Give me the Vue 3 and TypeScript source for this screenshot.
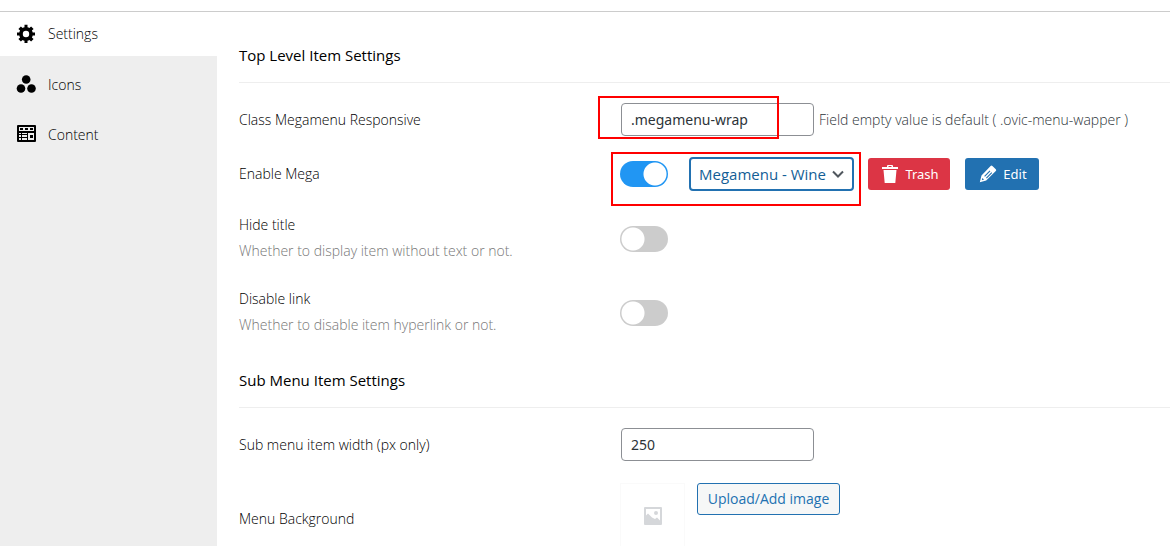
<script setup lang="ts">
import { ref } from 'vue'

const tabs = [
  { id: 'settings', label: 'Settings' },
  { id: 'icons', label: 'Icons' },
  { id: 'content', label: 'Content' },
]
const activeTab = ref('settings')
const responsiveClass = ref('.megamenu-wrap')
const enableMega = ref(true)
const megamenu = ref('wine')
const hideTitle = ref(false)
const disableLink = ref(false)
const itemWidth = ref('250')
</script>

<template>
  <div class="panel">
    <nav class="sidebar">
      <button
        v-for="tab in tabs"
        :key="tab.id"
        type="button"
        class="tab"
        :class="{ active: tab.id === activeTab }"
        @click="activeTab = tab.id"
      >
        <svg v-if="tab.id === 'settings'" class="tab-icon" viewBox="0 0 20 20" aria-hidden="true">
          <path d="M19 11.500h-2.300a6.800 6.800 0 0 1-.8 1.900l1.700 1.700-2.500 2.500-1.700-1.700a6.800 6.800 0 0 1-1.900.8V19h-3v-2.300a6.800 6.800 0 0 1-1.900-.8l-1.700 1.700-2.500-2.500 1.700-1.700a6.800 6.800 0 0 1-.8-1.900H1v-3h2.300a6.800 6.800 0 0 1 .8-1.900L2.400 4.900l2.500-2.500 1.700 1.700a6.800 6.800 0 0 1 1.900-.8V.8h3v2.500a6.800 6.800 0 0 1 1.900.8l1.700-1.700 2.500 2.500-1.700 1.700a6.800 6.800 0 0 1 .8 1.900H19zM10 13.200a3.200 3.200 0 1 0 0-6.400 3.200 3.200 0 0 0 0 6.400z" />
        </svg>
        <svg v-else-if="tab.id === 'icons'" class="tab-icon" viewBox="0 0 20 20" aria-hidden="true">
          <circle cx="10.200" cy="4.500" r="4.300" />
          <circle cx="5" cy="13.500" r="4.300" />
          <circle cx="15.500" cy="13.500" r="4.300" />
        </svg>
        <svg v-else class="tab-icon" viewBox="0 0 20 20" aria-hidden="true">
          <path fill-rule="evenodd" d="M2 0h17a1 1 0 0 1 1 1v15a1 1 0 0 1-1 1H2a1 1 0 0 1-1-1V1a1 1 0 0 1 1-1zM3 2v4h15V2zM3 8v1h2V8zM3 10v2h2v-2zM6 8v1h5V8zM6 10v2h5v-2zM3 13v2h2v-2zM6 13v2h5v-2zM12 8v7h6V8z" />
          <path d="M4 3h3v2H4zM9 3h3v2H9zM14 3h3v2h-3zM14 10h3v3h-3z" />
        </svg>
        {{ tab.label }}
      </button>
    </nav>

    <main class="content">
      <section>
        <h2>Top Level Item Settings</h2>
        <div class="row">
          <label class="name" for="responsive-class">Class Megamenu Responsive</label>
          <div class="field">
            <input id="responsive-class" v-model="responsiveClass" class="text" type="text" />
            <span class="note">Field empty value is default ( .ovic-menu-wapper )</span>
            <span class="mark mark-class"></span>
          </div>
        </div>
        <div class="row actions">
          <label class="name" for="enable-mega">Enable Mega</label>
          <div class="field">
            <input id="enable-mega" v-model="enableMega" class="switch" type="checkbox" />
            <span class="select-wrap">
              <select v-model="megamenu" aria-label="Megamenu">
                <option value="wine">Megamenu - Wine</option>
              </select>
              <svg class="chevron" viewBox="0 0 12 8" aria-hidden="true"><path d="M1 1.500l5 5 5-5" /></svg>
            </span>
            <button type="button" class="btn danger">
              <svg viewBox="0 0 18 18" aria-hidden="true">
                <path fill-rule="evenodd" d="M1 4V2h5V1q0-1 1-1h4q1 0 1 1v1h5v2zM7.500 2h3V1h-3zM2.500 5h13l-1.200 13H3.700z" />
              </svg>
              Trash
            </button>
            <button type="button" class="btn primary">
              <svg viewBox="0 0 18 18" aria-hidden="true">
                <path fill-rule="evenodd" d="M11.600.900q.900-.900 1.800 0l3.400 3.400q.900.900 0 1.800L7.200 15.500.8 17.200l1.700-6.800zM5.200 10.900l5.400-5.400.8.800-5.400 5.400zM7 12.700l5.400-5.400.8.800-5.400 5.400zM3.300 12.900l-.5 2.300 2.300-.6z" />
              </svg>
              Edit
            </button>
            <span class="mark mark-mega"></span>
          </div>
        </div>
        <div class="row tall">
          <div class="name">
            <label for="hide-title">Hide title</label>
            <p>Whether to display item without text or not.</p>
          </div>
          <div class="field"><input id="hide-title" v-model="hideTitle" class="switch" type="checkbox" /></div>
        </div>
        <div class="row tall">
          <div class="name">
            <label for="disable-link">Disable link</label>
            <p>Whether to disable item hyperlink or not.</p>
          </div>
          <div class="field"><input id="disable-link" v-model="disableLink" class="switch" type="checkbox" /></div>
        </div>
      </section>

      <section>
        <h2>Sub Menu Item Settings</h2>
        <div class="row">
          <label class="name" for="item-width">Sub menu item width (px only)</label>
          <div class="field"><input id="item-width" v-model="itemWidth" class="text" type="text" /></div>
        </div>
        <div class="row media">
          <label class="name" for="background">Menu Background</label>
          <div class="field">
            <span class="preview">
              <svg viewBox="0 0 18 18" aria-hidden="true">
                <path fill-rule="evenodd" d="M1 0h16q1 0 1 1v16q0 1-1 1H1q-1 0-1-1V1q0-1 1-1zM2 2v6.500l2-2 4 4 3 1.500 2-1.500 3 3V2zM12 4a2 2 0 1 1 0 4 2 2 0 0 1 0-4z" />
              </svg>
            </span>
            <button id="background" type="button" class="btn outline">Upload/Add image</button>
          </div>
        </div>
      </section>
    </main>
  </div>
</template>

<style>
body {
  margin: 0;
  background: #fff;
}
</style>

<style scoped>
.panel {
  box-sizing: border-box;
  display: flex;
  height: calc(100vh - 11px);
  margin-top: 11px;
  border-top: 1px solid #ccc;
  overflow: hidden;
  color: #000;
  font: 300 14px/20px "Open Sans", "Noto Sans", sans-serif;
}
.sidebar {
  flex: none;
  width: 217px;
  background: #eee;
}
.tab {
  display: flex;
  align-items: center;
  gap: 12px;
  width: 100%;
  height: 50px;
  padding: 0 16px;
  border: 0;
  background: transparent;
  color: #000;
  font: inherit;
  text-align: left;
}
.tab.active {
  height: 44px;
  margin-bottom: 4px;
  background: #fff;
}
.tab-icon {
  width: 20px;
  height: 20px;
  fill: #000;
}
.content {
  flex: 1;
  min-width: 0;
  padding: 17px 0 0 22px;
}
section {
  padding-bottom: 4px;
}
h2 {
  margin: 0 0 9px;
  padding: 16px 0;
  border-bottom: 1px solid #eee;
  font-size: 15px;
  line-height: 21px;
  font-weight: 500;
}
.row {
  box-sizing: border-box;
  display: grid;
  grid-template-columns: 381px 1fr;
  align-items: center;
  min-height: 55px;
}
.actions {
  padding-bottom: 1px;
}
.tall {
  min-height: 74px;
}
.tall .name {
  padding-bottom: 2px;
}
.name p {
  margin: 6px 0 0;
  color: #777;
}
.field {
  position: relative;
  display: flex;
  align-items: center;
}
.text {
  box-sizing: border-box;
  width: 193px;
  height: 33px;
  margin: 0 5px 0 1px;
  padding: 0 9px;
  border: 1px solid #8c8f94;
  border-radius: 4px;
  background: #fff;
  color: #2c3338;
  font: 400 14px/20px "Noto Sans", sans-serif;
}
.note {
  color: #2c3338;
  white-space: nowrap;
}
.switch {
  appearance: none;
  flex: none;
  width: 48px;
  height: 26px;
  margin: 0;
  border-radius: 13px;
  background: radial-gradient(circle at 13px 13px, #fff 11px, #ccc 12px);
}
.switch:checked {
  background: radial-gradient(circle at 35px 13px, #fff 11px, #2196f3 12px);
}
.select-wrap {
  position: relative;
  margin: 0 14px 0 21px;
}
select {
  appearance: none;
  display: block;
  box-sizing: border-box;
  width: 165px;
  height: 34px;
  padding: 0 24px 0 8px;
  border: 2px solid #2271b1;
  border-radius: 4px;
  background: #fff;
  color: #135e96;
  font: 400 15px/20px "Open Sans", sans-serif;
}
.chevron {
  position: absolute;
  right: 10px;
  top: 13px;
  width: 12px;
  height: 8px;
  fill: none;
  stroke: #50575e;
  stroke-width: 2;
  pointer-events: none;
}
.btn {
  box-sizing: border-box;
  display: flex;
  align-items: center;
  justify-content: center;
  gap: 6px;
  height: 32px;
  padding: 0 11px 0 13px;
  border: 1px solid transparent;
  border-radius: 3px;
  color: #fff;
  font: 400 13px/20px "Noto Sans", sans-serif;
  white-space: nowrap;
}
.btn svg {
  flex: none;
  width: 18px;
  height: 18px;
  fill: #fff;
}
.danger {
  width: 82px;
  margin-right: 15px;
  background: #dc3545;
}
.primary {
  width: 74px;
  background: #2271b1;
}
.outline {
  width: 143px;
  padding: 0;
  border-color: #2271b1;
  background: #f6f7f7;
  color: #2271b1;
  font: 400 14px/20px "Open Sans", sans-serif;
}
.media {
  margin-top: 11px;
  min-height: 72px;
}
.media .field {
  align-self: start;
  align-items: flex-start;
  gap: 12px;
}
.preview {
  box-sizing: border-box;
  display: flex;
  align-items: center;
  justify-content: center;
  width: 65px;
  height: 65px;
  border: 1px solid #fafafa;
}
.preview svg {
  width: 18px;
  height: 18px;
  fill: #d5d7da;
}
.mark {
  position: absolute;
  box-sizing: border-box;
  border: 2px solid #f00;
  pointer-events: none;
}
.mark-class {
  left: -22px;
  top: -7px;
  width: 181px;
  height: 43px;
}
.mark-mega {
  left: -9px;
  top: -5px;
  width: 250px;
  height: 54px;
}
</style>
